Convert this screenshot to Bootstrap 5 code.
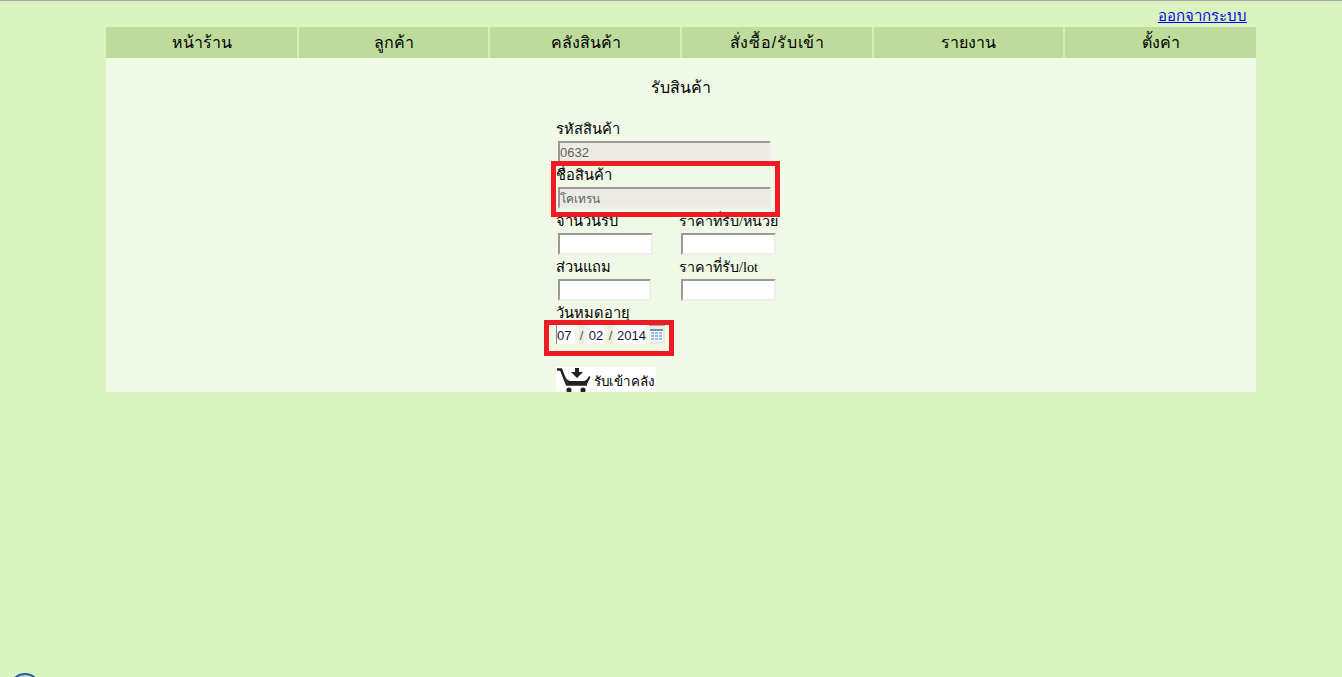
<!DOCTYPE html>
<html lang="th">
<head>
  <meta charset="UTF-8">
  <meta name="viewport" content="width=device-width, initial-scale=1.0">
  <title>รับสินค้า</title>
  <link href="https://cdn.jsdelivr.net/npm/bootstrap@5.3.0/dist/css/bootstrap.min.css" rel="stylesheet">
  <style>
    html, body { height: 100%; overflow: hidden; }
    body {
      background: #daf4bf;
      border-top: 1px solid #a6a6a6;
      font-family: "Liberation Serif", "Noto Sans", serif;
      font-size: 14.7px;
      color: #000;
      position: relative;
    }
    .shop-wrap { width: 1150px; margin-left: 106px; }
    .logout-row { height: 26px; padding-right: 9px; font-size: 15px; line-height: 30px; text-align: right; }
    .logout-row a { color: #0000ee; }
    .menu-bar { display: grid; grid-template-columns: repeat(6, 1fr); height: 31px; background: #bddc9b; }
    .menu-item {
      line-height: 32px;
      text-align: center;
      font-family: "Liberation Sans", "Noto Sans", sans-serif;
      font-size: 16px;
      border-left: 2px solid #d3eeb6;
      margin-left: -1px;
    }
    .menu-item:first-child { border-left: 0; margin-left: 0; }
    .menu-wide { letter-spacing: 0.8px; }
    .panel-body { height: 334px; background: #f0f9e6; overflow: hidden; position: relative; }
    .panel-title {
      padding-top: 18px;
      height: 60px;
      text-align: center;
      font-family: "Liberation Sans", "Noto Sans", sans-serif;
      font-size: 16px;
      line-height: 24px;
    }
    .form-area { margin-left: 450px; width: 240px; }
    .field-label { display: block; height: 23px; line-height: 22px; white-space: nowrap; }
    .label-tight { font-size: 14.3px; }
    .field-input {
      display: block;
      margin-left: 2px;
      height: 22px;
      padding: 0;
      border: 2px solid;
      border-color: #999 #eee #eee #999;
      background: #fff;
      font-family: "Liberation Sans", "Noto Sans", sans-serif;
      font-size: 13px;
      color: #5f5f5f;
      outline: 0;
    }
    .field-input:disabled { background: #ebebe4; }
    .input-thai { font-size: 12px; }
    .w-long { width: 213px; }
    .w-short { width: 95px; }
    .w-shorter { width: 93px; }
    .two-col { display: grid; grid-template-columns: 123px 110px; }
    .field-row { margin-bottom: 1px; }
    .date-box {
      display: flex;
      align-items: stretch;
      height: 19px;
      font-family: "Liberation Sans", sans-serif;
      font-size: 13px;
      line-height: 21px;
    }
    .date-seg { background: #fff; color: #1a1040; text-align: center; }
    .seg-day { width: 19px; border-left: 1px solid #888; text-align: left; }
    .seg-month { width: 16px; }
    .seg-year { width: 28px; white-space: nowrap; }
    .date-sep { width: 5px; background: #ebebe4; color: #555; margin: 0 4px; display: flex; justify-content: center; }
    .date-cal { width: 16px; background: #ebebe4; border-top: 1px solid #aaa; margin-left: 4px; padding: 3px 1px 0; }
    .stock-btn {
      display: flex;
      align-items: flex-start;
      width: 100px;
      height: 30px;
      margin-top: 23px;
      background: #fff;
      font-family: "Liberation Sans", "Noto Sans", sans-serif;
      font-size: 13.4px;
      line-height: 29px;
    }
    .mark-box { position: absolute; border: 5px solid #ed1c24; }
    .mark-name { left: 551px; top: 160px; width: 229px; height: 56px; }
    .mark-date { left: 544px; top: 319px; width: 130px; height: 36px; }
    .corner-round {
      position: absolute;
      left: 9px;
      top: 672px;
      width: 32px;
      height: 32px;
      border: 2px solid #2b5f9e;
      border-radius: 50%;
      background: #c7d3e0;
    }
  </style>
</head>
<body>
  <div class="shop-wrap">
    <div class="logout-row"><a href="#">ออกจากระบบ</a></div>
    <div class="menu-bar">
      <div class="menu-item">หน้าร้าน</div>
      <div class="menu-item">ลูกค้า</div>
      <div class="menu-item">คลังสินค้า</div>
      <div class="menu-item menu-wide">สั่งซื้อ/รับเข้า</div>
      <div class="menu-item">รายงาน</div>
      <div class="menu-item">ตั้งค่า</div>
    </div>
    <div class="panel-body">
      <div class="panel-title">รับสินค้า</div>
      <div class="form-area">
        <div class="field-row">
          <label class="field-label">รหัสสินค้า</label>
          <input class="field-input w-long" value="0632" disabled>
        </div>
        <div class="field-row">
          <label class="field-label">ชื่อสินค้า</label>
          <input class="field-input input-thai w-long" value="โคเทรน" disabled>
        </div>
        <div class="field-row two-col">
          <div>
            <label class="field-label">จำนวนรับ</label>
            <input class="field-input w-short">
          </div>
          <div>
            <label class="field-label label-tight">ราคาที่รับ/หน่วย</label>
            <input class="field-input w-short">
          </div>
        </div>
        <div class="field-row two-col">
          <div>
            <label class="field-label">ส่วนแถม</label>
            <input class="field-input w-shorter">
          </div>
          <div>
            <label class="field-label label-tight">ราคาที่รับ/lot</label>
            <input class="field-input w-short">
          </div>
        </div>
        <label class="field-label">วันหมดอายุ</label>
        <div class="date-box">
          <span class="date-seg seg-day">07</span>
          <span class="date-sep">/</span>
          <span class="date-seg seg-month">02</span>
          <span class="date-sep">/</span>
          <span class="date-seg seg-year">2014</span>
          <span class="date-cal">
            <svg width="13" height="12" viewBox="0 0 13 12" class="d-block">
              <rect width="13" height="12" fill="#fff"/>
              <rect width="13" height="2" fill="#7d8da3"/>
              <path d="M1 3h3v2H1zM5 3h3v2H5zM9 3h3v2H9zM1 6h3v2H1zM5 6h3v2H5zM9 6h3v2H9zM1 9h3v2H1zM5 9h3v2H5zM9 9h3v2H9z" fill="#8db6ee"/>
            </svg>
          </span>
        </div>
        <div class="stock-btn">
          <svg width="38" height="30" viewBox="0 0 38 30" class="flex-shrink-0">
            <path d="M1 2.500h4l6 15h20" fill="none" stroke="#222" stroke-width="2.600"/>
            <path d="M9 9q2 5 6 5h12q4 0 6-5l1.500 1-3.500 7H12z" fill="#222"/>
            <path d="M19 1h4v4h4l-6 6-6-6h4z" fill="#222"/>
            <circle cx="13" cy="23" r="2.600" fill="#222"/>
            <circle cx="27" cy="23" r="2.600" fill="#222"/>
          </svg>
          <span>รับเข้าคลัง</span>
        </div>
      </div>
    </div>
  </div>
  <div class="mark-box mark-name"></div>
  <div class="mark-box mark-date"></div>
  <div class="corner-round"></div>
  <script src="https://cdn.jsdelivr.net/npm/bootstrap@5.3.0/dist/js/bootstrap.bundle.min.js"></script>
</body>
</html>
